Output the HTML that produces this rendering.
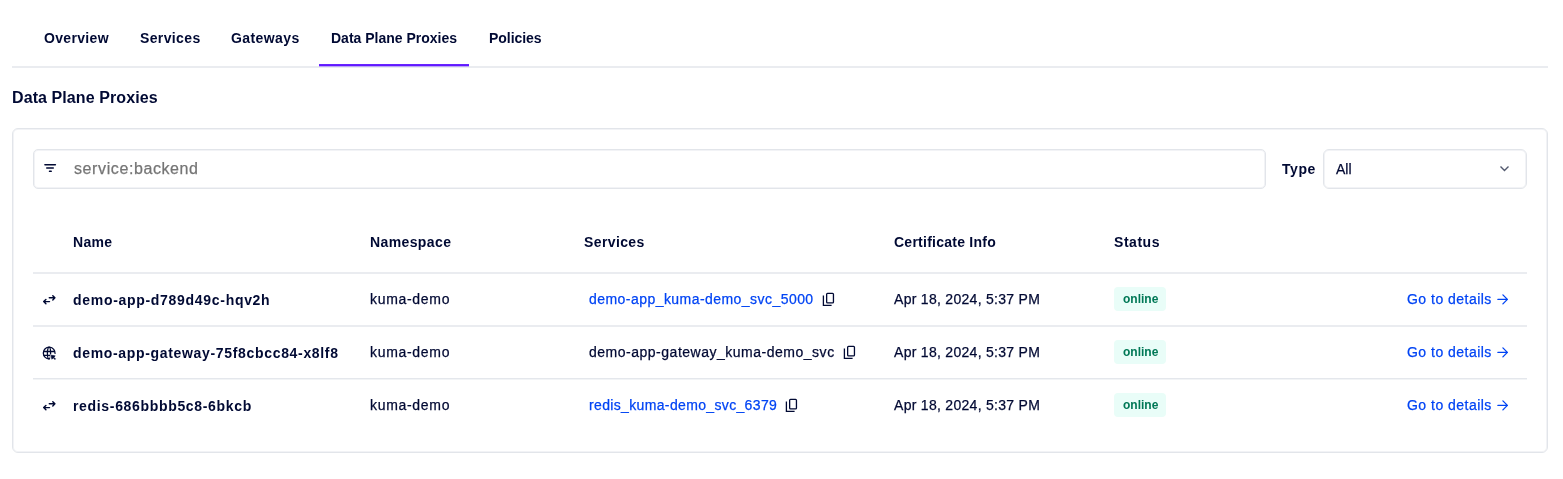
<!DOCTYPE html>
<html><head><meta charset="utf-8">
<style>
*{box-sizing:border-box;margin:0;padding:0}
html,body{width:1563px;height:479px;background:#fff;overflow:hidden}
body{font-family:"Liberation Sans",sans-serif;color:#000933;position:relative}
.t{position:absolute;white-space:nowrap;will-change:transform;line-height:20px;font-size:14px}
.t:not(.b){-webkit-text-stroke:0.25px currentColor}
.b{font-weight:bold}
.ln{position:absolute;height:2px;background:#eaecf0}
.link{color:#0044f4}
.badge{position:absolute;width:52px;height:24px;border-radius:4px;background:#e9fdf8}
.badge span{will-change:transform;position:absolute;left:8.5px;top:2.3px;line-height:20px;font-size:12px;font-weight:bold;color:#007856;white-space:nowrap}
svg{position:absolute;overflow:visible}
</style></head><body>
<!-- tabs -->
<div class="t b" id="tab1" style="letter-spacing:0.33px;left:44px;top:28px">Overview</div>
<div class="t b" id="tab2" style="letter-spacing:0.37px;left:140px;top:28px">Services</div>
<div class="t b" id="tab3" style="letter-spacing:0.4px;left:231px;top:28px">Gateways</div>
<div class="t b" id="tab4" style="letter-spacing:0px;left:331px;top:28px">Data Plane Proxies</div>
<div class="t b" id="tab5" style="letter-spacing:-0.05px;left:489px;top:28px">Policies</div>
<div class="ln" style="left:12px;top:66px;width:1536px"></div>
<div style="position:absolute;left:319px;top:64px;width:150px;height:3px;background:linear-gradient(#6c2dff 0,#6119ff 1px,#6119ff 2px,#bba4f8 2px)"></div>

<div class="t b" id="h1" style="letter-spacing:0.09px;left:12px;top:88px;font-size:16px;line-height:20px">Data Plane Proxies</div>

<!-- card -->
<div style="position:absolute;left:12px;top:128px;width:1536px;height:325px;border:1px solid #e2e5ea;box-shadow:inset 0 0 0 1px #f2f3f6;border-radius:6px"></div>

<!-- filter input -->
<div style="position:absolute;left:33px;top:149px;width:1233px;height:40px;border:1px solid #e2e5ea;box-shadow:inset 0 0 0 1px #f2f3f6;border-radius:5px"></div>
<svg style="left:44px;top:163px" width="13" height="10" viewBox="0 0 13 10">
<rect x="0.2" y="0.9" width="11.9" height="1.6" rx="0.7" fill="#000933"/>
<rect x="2" y="4.3" width="8" height="1.5" rx="0.7" fill="#000933"/>
<rect x="4.8" y="7.6" width="3.1" height="1.5" rx="0.7" fill="#000933"/>
</svg>
<div class="t" id="ph" style="letter-spacing:0.6px;left:74px;top:159px;font-size:16px;color:#757575">service:backend</div>

<div class="t b" id="type" style="letter-spacing:0.55px;left:1282px;top:159px">Type</div>
<div style="position:absolute;left:1323px;top:149px;width:204px;height:40px;border:1px solid #e2e5ea;box-shadow:inset 0 0 0 1px #f2f3f6;border-radius:6px"></div>
<div class="t" id="all" style="letter-spacing:0px;left:1335.6px;top:159px">All</div>
<svg style="left:1499px;top:165px" width="12" height="8" viewBox="0 0 12 8">
<path d="M1.5 1.5 L5.5 5.5 L9.5 1.5" fill="none" stroke="#52596e" stroke-width="1.4"/>
</svg>

<!-- header -->
<div class="t b" id="hName" style="letter-spacing:0.3px;left:73px;top:232px">Name</div>
<div class="t b" id="hNs" style="letter-spacing:0.39px;left:370px;top:232px">Namespace</div>
<div class="t b" id="hSvc" style="letter-spacing:0.39px;left:584px;top:232px">Services</div>
<div class="t b" id="hCert" style="letter-spacing:0.25px;left:894px;top:232px">Certificate Info</div>
<div class="t b" id="hStatus" style="letter-spacing:0.54px;left:1114px;top:232px">Status</div>
<div class="ln" style="left:33px;top:272px;width:1494px"></div>
<div class="ln" style="left:33px;top:325px;width:1494px"></div>
<div class="ln" style="left:33px;top:378px;width:1494px;background:linear-gradient(#e4e7ec 50%,#f2f4f6 50%)"></div>

<!-- rows -->
<!-- row 1 -->
<svg style="left:41px;top:291px" width="16" height="16" viewBox="0 0 16 16">
<g fill="none" stroke="#000933" stroke-width="1.45" stroke-linecap="round" stroke-linejoin="round">
<path d="M8.3 6.8H13.8M11.8 4.7L13.9 6.8L11.8 8.9"/>
<path d="M8.5 10.6H2.8M4.9 8.5L2.7 10.6L4.9 12.8"/>
</g></svg>
<div class="t b" id="r1n" style="letter-spacing:0.7px;left:73px;top:289.5px">demo-app-d789d49c-hqv2h</div>
<div class="t" id="r1ns" style="letter-spacing:0.69px;left:370px;top:289px">kuma-demo</div>
<div class="t link" id="r1s" style="letter-spacing:0.45px;left:589px;top:289px">demo-app_kuma-demo_svc_5000</div>
<svg style="left:822px;top:292px" width="14" height="15" viewBox="0 0 14 15">
<g fill="none" stroke="#000933" stroke-width="1.3">
<rect x="4.65" y="1.45" width="6.8" height="9.4" rx="0.9"/>
<path d="M1.4 3.6V13.4H9.6"/>
</g></svg>
<div class="t" id="r1c" style="letter-spacing:0.29px;left:894px;top:289px">Apr 18, 2024, 5:37 PM</div>
<div class="badge" style="left:1114px;top:287px"><span>online</span></div>
<div class="t link" id="r1g" style="letter-spacing:0.48px;left:1407px;top:289px">Go to details</div>
<svg style="left:1496px;top:293px" width="13" height="13" viewBox="0 0 13 13">
<g fill="none" stroke="#0044f4" stroke-width="1.3" stroke-linejoin="round" stroke-linecap="round"><path d="M1.9 6.4H11.4M6.9 1.9L11.4 6.4L6.9 10.9"/></g></svg>

<!-- row 2 -->
<svg style="left:41px;top:345px" width="17" height="17" viewBox="0 0 17 17">
<g fill="none" stroke="#000933" stroke-width="1.3">
<path d="M14.05 8.8A5.9 5.9 0 1 0 8.6 13.95"/>
<ellipse cx="8.0" cy="8.05" rx="1.6" ry="5.9"/>
<path d="M2.4 6.5H13.9M2.6 10.3H9.3"/>
</g>
<path d="M9.3 9.3H17V17H9.3Z" fill="#fff"/><path d="M10.2 10.2L14.2 10.9L12.8 12.2L14.5 13.9L13.9 14.5L12.2 12.8L10.9 14.2Z" fill="#000933" stroke="#000933" stroke-width="0.7" stroke-linejoin="round"/>
</svg>
<div class="t b" id="r2n" style="letter-spacing:0.67px;left:73px;top:342.5px">demo-app-gateway-75f8cbcc84-x8lf8</div>
<div class="t" id="r2ns" style="letter-spacing:0.69px;left:370px;top:342px">kuma-demo</div>
<div class="t" id="r2s" style="letter-spacing:0.51px;left:589px;top:342px">demo-app-gateway_kuma-demo_svc</div>
<svg style="left:843px;top:345px" width="14" height="15" viewBox="0 0 14 15">
<g fill="none" stroke="#000933" stroke-width="1.3">
<rect x="4.65" y="1.45" width="6.8" height="9.4" rx="0.9"/>
<path d="M1.4 3.6V13.4H9.6"/>
</g></svg>
<div class="t" id="r2c" style="letter-spacing:0.29px;left:894px;top:342px">Apr 18, 2024, 5:37 PM</div>
<div class="badge" style="left:1114px;top:340px"><span>online</span></div>
<div class="t link" id="r2g" style="letter-spacing:0.48px;left:1407px;top:342px">Go to details</div>
<svg style="left:1496px;top:346px" width="13" height="13" viewBox="0 0 13 13">
<g fill="none" stroke="#0044f4" stroke-width="1.3" stroke-linejoin="round" stroke-linecap="round"><path d="M1.9 6.4H11.4M6.9 1.9L11.4 6.4L6.9 10.9"/></g></svg>

<!-- row 3 -->
<svg style="left:41px;top:397px" width="16" height="16" viewBox="0 0 16 16">
<g fill="none" stroke="#000933" stroke-width="1.45" stroke-linecap="round" stroke-linejoin="round">
<path d="M8.3 6.8H13.8M11.8 4.7L13.9 6.8L11.8 8.9"/>
<path d="M8.5 10.6H2.8M4.9 8.5L2.7 10.6L4.9 12.8"/>
</g></svg>
<div class="t b" id="r3n" style="letter-spacing:0.67px;left:73px;top:395.5px">redis-686bbbb5c8-6bkcb</div>
<div class="t" id="r3ns" style="letter-spacing:0.69px;left:370px;top:395px">kuma-demo</div>
<div class="t link" id="r3s" style="letter-spacing:0.35px;left:589px;top:395px">redis_kuma-demo_svc_6379</div>
<svg style="left:785px;top:398px" width="14" height="15" viewBox="0 0 14 15">
<g fill="none" stroke="#000933" stroke-width="1.3">
<rect x="4.65" y="1.45" width="6.8" height="9.4" rx="0.9"/>
<path d="M1.4 3.6V13.4H9.6"/>
</g></svg>
<div class="t" id="r3c" style="letter-spacing:0.29px;left:894px;top:395px">Apr 18, 2024, 5:37 PM</div>
<div class="badge" style="left:1114px;top:393px"><span>online</span></div>
<div class="t link" id="r3g" style="letter-spacing:0.48px;left:1407px;top:395px">Go to details</div>
<svg style="left:1496px;top:399px" width="13" height="13" viewBox="0 0 13 13">
<g fill="none" stroke="#0044f4" stroke-width="1.3" stroke-linejoin="round" stroke-linecap="round"><path d="M1.9 6.4H11.4M6.9 1.9L11.4 6.4L6.9 10.9"/></g></svg>
</body></html>
